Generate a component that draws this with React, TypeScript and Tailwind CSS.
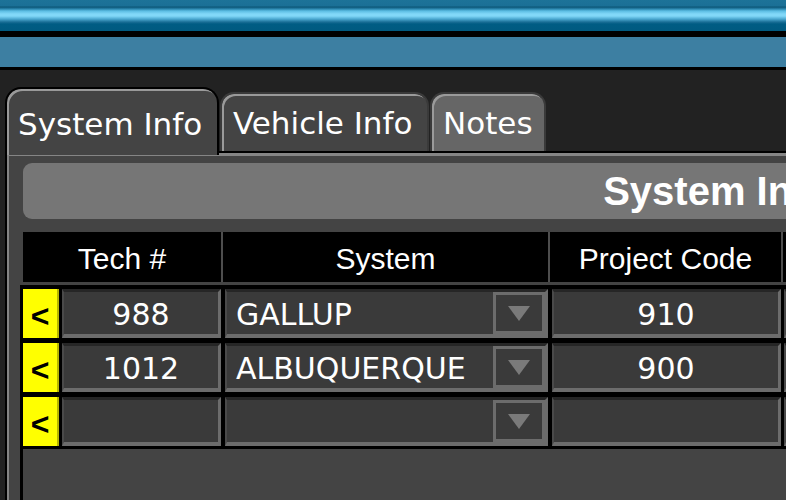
import { useState } from 'react';

const rows = [
  { tech: '988', system: 'GALLUP', code: '910' },
  { tech: '1012', system: 'ALBUQUERQUE', code: '900' },
  { tech: '', system: '', code: '' },
];

const tabs = [
  { name: 'System Info', width: 'w-[214px]' },
  { name: 'Vehicle Info', width: 'w-[209px]' },
  { name: 'Notes', width: 'w-[116px]' },
];

const cellClass =
  'h-full bg-[#3a3a3a] border-t-[3px] border-l-[2px] border-r-[3px] border-b-[4px] border-t-[#262626] border-l-[#4a4a4a] border-r-[#6c6c6c] border-b-[#6c6c6c]';

function DropButton() {
  return (
    <div className="flex h-full w-[52px] items-center justify-center border-[3px] border-[#6c6c6c] bg-[#3a3a3a]">
      <svg width="22" height="15" viewBox="0 0 22 15">
        <polygon points="0,0 22,0 11,15" fill="#7a7a7a" />
      </svg>
    </div>
  );
}

export default function App() {
  const [active, setActive] = useState(0);

  return (
    <div className="flex h-[500px] w-[786px] flex-col overflow-hidden bg-[#222] font-['DejaVu_Sans',sans-serif] text-white">
      {/* Title strips */}
      <div className="h-[31px] shrink-0 bg-[linear-gradient(to_bottom,#1d7398_0px,#1b7096_6px,#0b5575_7px,#2a86ae_9px,#5cbde3_11px,#82d8f8_14px,#82d8f8_16px,#4ca9d1_19px,#1a6e96_22px,#005c84_24px,#005a80_31px)]" />
      <div className="h-[6px] shrink-0 bg-black" />
      <div className="h-[30px] shrink-0 bg-[#3d7fa2]" />
      <div className="h-[3px] shrink-0 bg-black" />

      {/* Tabs */}
      <div className="mt-[17px] flex h-[64px] shrink-0 items-end pl-[5px]">
        {tabs.map((tab, i) =>
          i === active ? (
            <button
              key={tab.name}
              onClick={() => setActive(i)}
              className={`relative z-10 -mb-[4px] h-[68px] ${tab.width} shrink-0 rounded-t-[16px] border-2 border-b-0 border-black bg-[#444] pl-[11px] pt-[4px] text-left text-[31px] leading-[36px] shadow-[inset_2px_2px_0_#9a9a9a]`}
            >
              {tab.name}
            </button>
          ) : (
            <button
              key={tab.name}
              onClick={() => setActive(i)}
              className={`ml-[1px] h-[59px] ${tab.width} shrink-0 rounded-t-[14px] border-2 border-b-0 border-[#3a3a3a] pl-[11px] pt-[1px] text-left text-[31px] leading-[36px] shadow-[inset_2px_2px_0_#9a9a9a] ${
                i === 2 ? 'bg-[#666]' : 'bg-[#444]'
              }`}
            >
              {tab.name}
            </button>
          )
        )}
      </div>

      {/* Panel */}
      <div className="ml-[5px] flex w-[1500px] grow flex-col border-l-2 border-t-2 border-black bg-[#444] pl-[16px] pt-[10px] shadow-[inset_2px_3px_0_#858585]">
        <div className="flex h-[56px] w-[1387px] shrink-0 items-center justify-center rounded-[9px] bg-[#767676] font-['Liberation_Sans',sans-serif] text-[40px] font-bold">
          System Info
        </div>

        {/* Table header */}
        <div className="mt-[13px] grid h-[50px] w-[1200px] shrink-0 grid-cols-[198px_325px_231px_1fr] gap-x-[2px] bg-[#4e4e4e] font-['Liberation_Sans',sans-serif] text-[30px]">
          <div className="flex items-center justify-center bg-black pt-[3px]">Tech #</div>
          <div className="flex items-center justify-center bg-black pt-[3px]">System</div>
          <div className="flex items-center justify-center bg-black pt-[3px]">Project Code</div>
          <div className="bg-black" />
        </div>

        {/* Rows */}
        <div className="-ml-[3px] mt-[3px] flex grow flex-col border-l-[3px] border-black">
          <div className="flex flex-col gap-[5px] bg-black pb-[3px] pt-[4px] text-[30px]">
            {rows.map((row, i) => (
              <div key={i} className="flex h-[49px]">
                <button className="flex w-[36px] shrink-0 items-center justify-center border-r-2 border-[#b5b500] bg-[#ffff00] pt-[4px] font-['Liberation_Sans',sans-serif] text-[32px] font-bold text-black">
                  &lt;
                </button>
                <div className={`ml-[3px] flex w-[159px] shrink-0 items-center justify-center pt-[3px] ${cellClass}`}>
                  {row.tech}
                </div>
                <div className={`ml-[4px] flex w-[323px] shrink-0 items-center justify-between ${cellClass}`}>
                  <span className="pl-[9px] pt-[3px]">{row.system}</span>
                  <DropButton />
                </div>
                <div className={`ml-[4px] flex w-[229px] shrink-0 items-center justify-center pt-[3px] ${cellClass}`}>
                  {row.code}
                </div>
                <div className={`ml-[3px] w-[300px] shrink-0 ${cellClass}`} />
              </div>
            ))}
          </div>
        </div>
      </div>
    </div>
  );
}
